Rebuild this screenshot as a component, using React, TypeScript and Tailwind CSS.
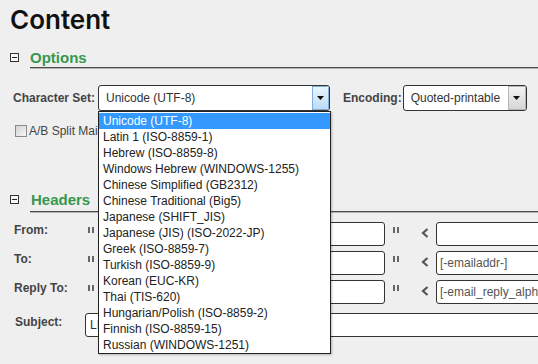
import React from "react";

const Minus = () => (
  <div className="w-[9px] h-[9px] border border-[#333] bg-[#f8f8f8] flex items-center justify-center">
    <div className="w-[5px] h-[1px] bg-[#222]" />
  </div>
);

const Quote = () => (
  <div className="flex gap-[2px] w-[6px] h-[6px]">
    <div className="w-[2px] h-[6px] bg-[#666]" />
    <div className="w-[2px] h-[6px] bg-[#666]" />
  </div>
);

const Chevron = () => (
  <svg width="8" height="10" viewBox="0 0 8 10">
    <polyline points="6.5,1 2,5 6.5,9" fill="none" stroke="#555" strokeWidth="2.2" />
  </svg>
);

const Arrow = () => (
  <svg width="7" height="4" viewBox="0 0 7 4">
    <polygon points="0,0 7,0 3.5,4" fill="#111" />
  </svg>
);

const items = [
  "Unicode (UTF-8)",
  "Latin 1 (ISO-8859-1)",
  "Hebrew (ISO-8859-8)",
  "Windows Hebrew (WINDOWS-1255)",
  "Chinese Simplified (GB2312)",
  "Chinese Traditional (Big5)",
  "Japanese (SHIFT_JIS)",
  "Japanese (JIS) (ISO-2022-JP)",
  "Greek (ISO-8859-7)",
  "Turkish (ISO-8859-9)",
  "Korean (EUC-KR)",
  "Thai (TIS-620)",
  "Hungarian/Polish (ISO-8859-2)",
  "Finnish (ISO-8859-15)",
  "Russian (WINDOWS-1251)",
];

const HeaderRow = ({ label, value }: { label: string; value?: string }) => (
  <div className="flex h-[24px]">
    <span className="shrink-0 w-[88px] pl-[14px] pt-[1px] text-[12px] leading-[14px] font-bold text-[#444]">{label}</span>
    <div className="shrink-0 mt-[5px]">
      <Quote />
    </div>
    <div className="shrink-0 ml-[6px] w-[285px] h-[24px] bg-white border border-[#333] rounded-[3px]" />
    <div className="shrink-0 ml-[8px] mt-[5px]">
      <Quote />
    </div>
    <div className="shrink-0 ml-[22px] mt-[6px] h-[10px]">
      <Chevron />
    </div>
    <div className="ml-[7px] w-[150px] shrink-0 h-[24px] bg-white border border-[#333] rounded-[3px] pl-[3px] text-[12px] leading-[22px] text-[#555] whitespace-nowrap overflow-hidden">
      {value}
    </div>
  </div>
);

export default function App() {
  return (
    <div className="relative w-[538px] h-[364px] overflow-hidden bg-[#efefef] font-['Liberation_Sans',Arial,sans-serif]">
      <div className="pl-[10px] pt-[3px] h-[37px] font-['Inter',sans-serif] text-[26px] leading-[34px] font-semibold text-[#111]">
        Content
      </div>

      <div className="flex mt-[12px]">
        <div className="ml-[10px] mt-[4px]">
          <Minus />
        </div>
        <div className="ml-[11px] flex-1 border-b border-[#4a4a4a] shadow-[0_1px_0_#b5b5b5]">
          <span className="block text-[15px] leading-[18px] font-bold text-[#35984f]">Options</span>
        </div>
      </div>

      <div className="flex items-center mt-[17px] h-[26px]">
        <span className="shrink-0 ml-[13px] w-[85px] text-[12px] font-bold text-[#444]">Character Set:</span>
        <div className="shrink-0 w-[232px] h-[26px] flex border border-[#333] rounded-[3px] bg-white overflow-hidden">
          <span className="flex-1 pl-[7px] text-[12px] leading-[24px] text-[#333]">Unicode (UTF-8)</span>
          <div className="w-[17px] border border-[#7eaedc] bg-gradient-to-b from-[#eaf4fd] to-[#bcdcf5] flex items-center justify-center">
            <Arrow />
          </div>
        </div>
        <span className="shrink-0 ml-[13px] text-[12px] font-bold text-[#444]">Encoding:</span>
        <div className="shrink-0 ml-[1px] w-[124px] h-[26px] flex border border-[#333] rounded-[3px] bg-white overflow-hidden">
          <span className="flex-1 pl-[7px] text-[12px] leading-[24px] text-[#333]">Quoted-printable</span>
          <div className="w-[18px] border border-[#b5b5b5] bg-gradient-to-b from-[#f4f4f4] to-[#d6d6d6] flex items-center justify-center">
            <Arrow />
          </div>
        </div>
      </div>

      <div className="flex items-center mt-[13px] h-[14px]">
        <div className="ml-[15px] w-[12px] h-[12px] border border-[#8a8a8a] bg-gradient-to-br from-[#d4d4d4] to-[#f6f6f6]" />
        <span className="ml-[2px] text-[12px] leading-[14px] text-[#444]">A/B Split Mailing</span>
      </div>

      <div className="mt-[53px]">
        <div className="flex">
          <div className="ml-[10px] mt-[4px]">
            <Minus />
          </div>
          <div className="ml-[11px] flex-1 border-b border-[#4a4a4a] shadow-[0_1px_0_#b5b5b5] pb-[2px]">
            <span className="block pl-[1px] text-[15px] leading-[18px] font-bold text-[#35984f]">Headers</span>
          </div>
        </div>
      </div>

      <div className="mt-[10px] flex flex-col gap-[5px]">
        <HeaderRow label="From:" />
        <HeaderRow label="To:" value="[-emailaddr-]" />
        <HeaderRow label="Reply To:" value="[-email_reply_alpha-]" />
      </div>

      <div className="flex h-[24px] mt-[9px]">
        <span className="shrink-0 w-[85px] pl-[15px] pt-[2px] text-[12px] leading-[14px] font-bold text-[#444]">Subject:</span>
        <div className="w-[470px] shrink-0 h-[24px] bg-white border border-[#333] rounded-[3px] pl-[4px] text-[12px] leading-[22px] text-[#333] whitespace-nowrap">
          LI
        </div>
      </div>

      <div className="absolute left-[98px] top-[111px] w-[233px] border border-[#222] bg-white pt-[1px] shadow-[1px_1px_2px_rgba(0,0,0,0.25)]">
        {items.map((it, i) => (
          <div
            key={it}
            className={
              i === 0
                ? "h-[16px] pl-[4px] text-[12px] leading-[16px] bg-[#3399ff] text-white whitespace-nowrap"
                : "h-[16px] pl-[4px] text-[12px] leading-[16px] text-[#222] whitespace-nowrap"
            }
          >
            {it}
          </div>
        ))}
      </div>
    </div>
  );
}
